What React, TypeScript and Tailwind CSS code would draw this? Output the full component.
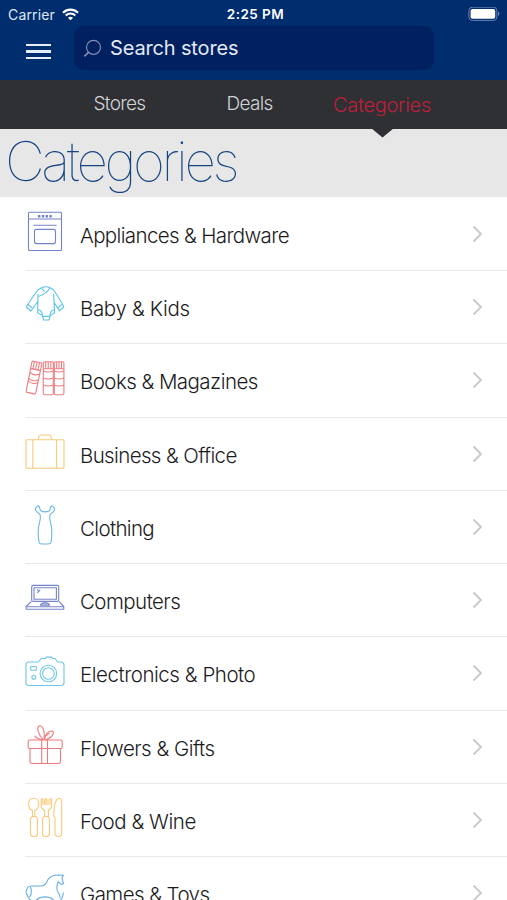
import React from "react";

interface Category {
  name: string;
  color: string;
  spacing: string;
  icon: React.ReactNode;
}

const categories: Category[] = [
  {
    name: "Appliances & Hardware",
    color: "text-[#7482c8]",
    spacing: "tracking-[-0.64px]",
    icon: (
      <>
        <rect x="3.5" y="1.3" width="33" height="38.2" rx="1" />
        <path d="M3.5 8h33M8.3 14.3h23.4" />
        <rect x="9.5" y="18.4" width="21" height="14.2" rx="2" />
        <path d="M13 5.2h14" strokeWidth="2.6" strokeDasharray="2.4 1.4" />
      </>
    ),
  },
  {
    name: "Baby & Kids",
    color: "text-[#5cc3ea]",
    spacing: "tracking-[-0.35px]",
    icon: (
      <>
        <path d="M16.500 3.800 12.800 6C9 11 5 17 1.200 23l4.700 4 6.800-9.300M25 3.800l3.600 2.200C32 11 36 17 38.800 23l-4.200 3.900-6-9.200M13 10l-.3 18.700 4.700 2.900 1.200 4.400h5.600l1-4.400 4.400-2.900L28.600 10" />
        <path d="M16.500 3.800c2.500-1.200 6-1.200 8.500 0-1.700 3.200-6.300 7-11.600 8.700M16.500 3.800l3 3.800M18 32.400h7M12.800 25.800c2.500.3 4.500 2.700 4.600 5.700M29.400 25.800c-2.800.5-4.400 3-4.200 5.700M3 20.500l4.600 3.900M36.900 20.400l-4.300 3.700" />
      </>
    ),
  },
  {
    name: "Books & Magazines",
    color: "text-[#ee7d80]",
    spacing: "tracking-[-0.55px]",
    icon: (
      <>
        <path d="M8.3 4.2l7.6 1.5q1.2.3.9 1.5L10.8 35.6q-.4 1.5-1.7 1.3L2.2 35.4q-1.3-.4-1-1.6L6.9 5.2q.3-1.2 1.4-1ZM6 11.6l9.6 2M5.2 15.3c2 2.4 6 3 9.3 1.7M3.9 21.4c2 2.3 6 3 9.3 1.7M3.4 24c2 2.3 6 3 9.2 1.8M9.3 4.6 8 11.8M12 5l-1.4 7.4M14.5 5.6 13 12.8" />
        <rect x="18.3" y="4.7" width="10" height="33" rx="1.4" />
        <rect x="29.3" y="4.7" width="9.6" height="33" rx="1.4" />
        <path d="M18.3 11.8h10M18.3 14c3 1.2 7 1.2 10 0M18.3 21c3 1.3 7 1.3 10 0M18.3 28c3 1.2 7 1.2 10 0M20.7 5v6.6M23.2 5v6.6M25.8 5v6.6M29.3 11.8h9.6M29.3 14c3 1.2 6.6 1.2 9.6 0M29.3 21c3 1.3 6.6 1.3 9.6 0M29.3 28c3 1.2 6.6 1.2 9.6 0M31.7 5v6.6M34 5v6.6M36.5 5v6.6" />
      </>
    ),
  },
  {
    name: "Business & Office",
    color: "text-[#f8ca79]",
    spacing: "tracking-[-0.63px]",
    icon: (
      <>
        <rect x="1" y="8.7" width="38" height="28.6" rx="1" />
        <path d="M7.8 8.7v28.6M31.6 8.7v28.6M13.3 8.7C13.3 5.4 14.5 4 17 4h6c2.5 0 3.7 1.4 3.7 4.7" />
      </>
    ),
  },
  {
    name: "Clothing",
    color: "text-[#68b8ec]",
    spacing: "tracking-[-0.65px]",
    icon: (
      <path d="M13.400 1.800c-2 .8-3.200 2.300-3 4.200 1 1.800 2.800 3 4.400 4.200 1 2 .7 4.300 0 7.200-1.800 5.800-2.200 12-.8 20.400 0 1.400.4 1.800 1.400 1.900 3 .4 6.300.4 9.300 0 1-.1 1.300-.5 1.400-1.900 1.300-8.300.9-14.600-.8-20.400-.8-2.900-1-5.200 0-7.200 1.600-1.200 3.400-2.400 4.200-4.200.2-1.900-1-3.400-2.900-4.200-2 1.500-.9 3.500-2.200 4.900-2.300 1.300-6.300 1.300-8.700 0-1.300-1.400-.3-3.400-2.300-4.900Z" />
    ),
  },
  {
    name: "Computers",
    color: "text-[#7684c7]",
    spacing: "tracking-[-0.55px]",
    icon: (
      <>
        <rect x="6.7" y="8.4" width="27" height="16" rx="1.5" />
        <rect x="9" y="10.7" width="22.4" height="11.5" />
        <path d="M6.5 24.4 1.2 29.500v2.800h37.600v-2.800l-5-5.100M1.200 29.800h37.600M12.200 15.800l3-2.800M12.300 13.500l1-1" />
        <path d="M15.500 28.300c.4-3.300 8.600-3.300 9 0Z" fill="currentColor" fillOpacity=".4" />
      </>
    ),
  },
  {
    name: "Electronics & Photo",
    color: "text-[#6fc8e8]",
    spacing: "tracking-[-0.46px]",
    icon: (
      <>
        <path d="M4 12h9.5l2.600-3.500h4.400l.8-1.400h5.400l.8 1.400h2.600L32.500 12H36q3 0 3 3v18q0 2.500-3 2.500H4q-3 0-3-2.500V15q0-3 3-3Z" />
        <circle cx="23.4" cy="23.5" r="8.3" />
        <circle cx="23.4" cy="23.5" r="5.8" />
        <rect x="5.7" y="16.5" width="5.6" height="3.8" />
        <circle cx="8.8" cy="27.3" r="2" />
      </>
    ),
  },
  {
    name: "Flowers & Gifts",
    color: "text-[#f0797d]",
    spacing: "tracking-[-0.52px]",
    icon: (
      <>
        <rect x="3.2" y="16" width="34" height="8.5" rx="1.5" />
        <path d="M5 24.500v13q0 2 2 2h26.500q2 0 2-2v-13M16.700 16v23.500M22.500 16v23.500M18 15.500C14 11 11 4 14 2c3.500-1.800 6 4.500 5 13.500M19.500 15.500c.5-5 4-9 8-8.500 2.500 1.500-1 8-7.500 8.500M18 15.500c-3 0-6-1-8.500-3.700M20 12.500c1.500-1.500 3-2.300 4.500-3" />
      </>
    ),
  },
  {
    name: "Food & Wine",
    color: "text-[#f8ca7b]",
    spacing: "tracking-[-0.45px]",
    icon: (
      <>
        <path d="M7.500 20v-6.500C5 12.500 3.500 10 3.600 7c0-3.400 2-5.700 5-5.700s5.200 2.300 5.200 5.700c0 3-1.500 5.500-4 6.500V20" />
        <rect x="5.5" y="19.5" width="7" height="20" rx="3" />
        <path d="M19.500 20v-7c-2-.8-3.300-2-3.300-4V2.500q.8-2 1.700 0V8M25 8V2.500q.8-2 1.700 0V9c0 2-1.300 3.200-3.300 4v7M19.700 8V2q1-1.400 1.500 0v6M23 8V2" />
        <rect x="17.5" y="19.5" width="7" height="20" rx="3" />
        <path d="M36.700 4v32.500c0 4-6.700 4-6.700 0V21c0-1.300-1.300-1.500-1.300-3 .5-5-.2-12 3.300-15.400 2-2 4.700-1.200 4.700 1.400Z" />
      </>
    ),
  },
  {
    name: "Games & Toys",
    color: "text-[#67aee5]",
    spacing: "tracking-[-0.58px]",
    icon: (
      <path d="M6.500 40c.5-5 2-8 5.500-10.500 4-3.500 12-3.500 16 0 3 2.500 4.500 6 5 10.500M1 22.500c1.500 4 3.300 7 6.500 9.500M1 22c1-4 1.500-6 5.500-6H16c5 0 5.500-3.500 7-6.500C25 6 29 5 34 5l4.500.3-1.500 2.300 1.500 6-2 1-3.500-3c-1 3-1.500 7-.5 9.500 1 2.500 3 4 2.500 7M5.500 17c1.500 4 .5 8-1 10M38.500 22.500c-.5 4-2 7-4 9" />
    ),
  },
];

const StatusBar = () => (
  <div className="flex h-7 items-center justify-between pl-[8px] pr-[7px] text-white">
    <div className="flex w-[160px] items-center gap-[7px]">
      <span className="text-[14px] tracking-[0.15px] text-[#dfe8f4]">Carrier</span>
      <svg width="17" height="13" viewBox="0 0 17 13" fill="none" stroke="white" strokeWidth="2.1">
        <path d="M1 4.700c4.200-4.100 10.800-4.100 15 0M3.700 7.500c2.700-2.600 6.900-2.600 9.600 0" />
        <path d="M8.500 12.300 5.900 9.700c1.500-1.300 3.700-1.300 5.200 0Z" fill="white" stroke="none" />
      </svg>
    </div>
    <span className="pl-[3px] text-[13.5px] font-semibold tracking-[0.45px]">2:25 PM</span>
    <div className="flex w-[160px] justify-end">
      <svg width="32" height="15" viewBox="0 0 32 15" fill="none">
        <rect x=".9" y=".2" width="28" height="13.2" rx="3.5" stroke="#6883ad" />
        <rect x="2.6" y="1.9" width="24.6" height="9.8" rx="1.8" fill="white" />
        <path d="M30.200 4.600c1.600.8 1.600 3.600 0 4.400Z" fill="#8299bd" />
      </svg>
    </div>
  </div>
);

const SearchHeader = () => (
  <div className="flex h-[52px] items-start pl-[26px]">
    <button className="mt-4 flex w-[25px] flex-col gap-[4px]" aria-label="Menu">
      <span className="h-[2.4px] w-full bg-[#e5edf8]" />
      <span className="h-[2.4px] w-full bg-[#e5edf8]" />
      <span className="h-[2.4px] w-full bg-[#e5edf8]" />
    </button>
    <div className="-mt-[2px] ml-[23px] flex h-11 w-[360px] items-center rounded-[10px] bg-[#002060] pl-[9px]">
      <svg width="19" height="19" viewBox="0 0 19 19" fill="none" stroke="#8190b5" strokeWidth="1.2">
        <circle cx="10.5" cy="8.3" r="7" />
        <path d="M5.500 13.300 1.300 17.300" strokeWidth="1.600" />
      </svg>
      <span className="ml-[8px] text-[20px] tracking-[-0.15px] text-[#e4e9f5]">Search stores</span>
    </div>
  </div>
);

const Tabs = () => (
  <nav className="relative flex h-[49px] items-center bg-[#2f3034] pl-[54px] text-[19px] font-light text-[#d2d2d4]">
    <span className="w-[131px] text-center tracking-[-0.7px]">Stores</span>
    <span className="w-[129px] text-center tracking-[-0.7px]">Deals</span>
    <span className="w-[136px] text-center text-[20px] tracking-[-0.3px] text-[#bd1f3a]">Categories</span>
    <svg className="absolute left-[371px] top-[48px]" width="23" height="10" viewBox="0 0 23 10">
      <path d="M0 0h23L11.500 9.600Z" fill="#2f3034" />
    </svg>
  </nav>
);

const CategoryRow = ({ category }: { category: Category }) => (
  <li className="ml-[25px] flex h-[73.26px] shrink-0 items-start border-b border-[#e9e9eb] pt-[13px]">
    <svg
      className={`shrink-0 ${category.color}`}
      width="40"
      height="42"
      viewBox="0 0 40 42"
      fill="none"
      stroke="currentColor"
      strokeWidth="1.1"
      strokeLinejoin="round"
    >
      {category.icon}
    </svg>
    <span className={`ml-[15px] mt-[10px] flex-1 whitespace-nowrap text-[20.5px] font-light leading-[30px] text-[#1b1b1d] ${category.spacing}`}>
      {category.name}
    </span>
    <svg className="mr-[24px] mt-[14px]" width="11" height="18" viewBox="0 0 11 18" fill="none" stroke="#c8c8cc" strokeWidth="1.8">
      <path d="M1.500 1.500 9 9l-7.500 7.500" />
    </svg>
  </li>
);

const App = () => {
  return (
    <div className="flex h-[900px] w-[507px] flex-col overflow-hidden bg-white font-['Inter',sans-serif]">
      <header className="shrink-0 bg-[#002d6d]">
        <StatusBar />
        <SearchHeader />
        <Tabs />
      </header>
      <div className="h-[68px] shrink-0 bg-[#e7e7e7] pl-[5px]">
        <h1 className="whitespace-nowrap text-[55px] font-thin leading-[64px] tracking-[-3.4px] text-[#164582]">Categories</h1>
      </div>
      <ul className="flex flex-col pt-[0.8px]">
        {categories.map((category) => (
          <CategoryRow key={category.name} category={category} />
        ))}
      </ul>
    </div>
  );
};

export default App;
